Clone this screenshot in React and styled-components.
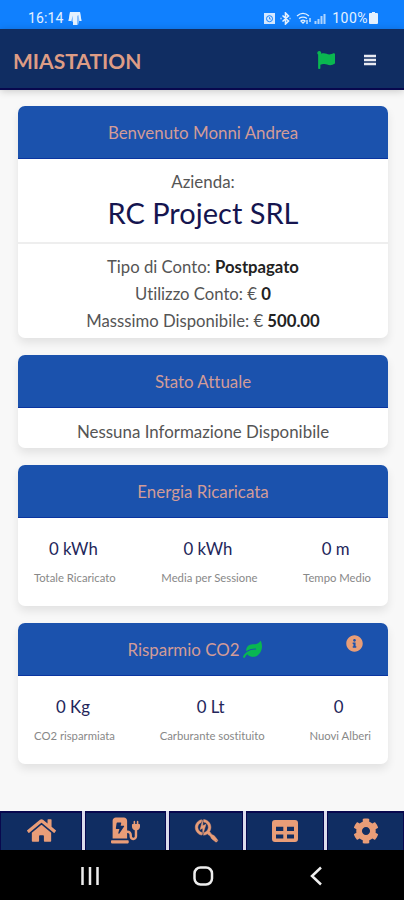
import React from 'react'
import styled, { createGlobalStyle } from 'styled-components';
import { FaFlag, FaLeaf, FaInfoCircle, FaHome, FaChargingStation, FaSearchengin, FaCog } from 'react-icons/fa';

const GlobalStyle = createGlobalStyle`
    * {
        box-sizing: border-box;
    }

    body {
        margin: 0;
        font-family: Lato, 'Liberation Sans', sans-serif;
        font-variant-ligatures: none;
        background-color: #f8f8f8;
    }
`

const Screen = styled.div`
    display: flex;
    flex-direction: column;
    height: 900px;
    width: 404px;
    overflow: hidden;
`

const StatusBar = styled.div`
    display: flex;
    align-items: center;
    flex: none;
    height: 29px;
    padding: 7px 26px 0 28px;
    background-color: #1080fe;
    color: #e4f1ff;
    font-family: Roboto, sans-serif;
    font-size: 14px;

    svg {
        display: block;
    }
`

const StatusIcons = styled.div`
    display: flex;
    align-items: center;
    gap: 5px;
    margin-left: auto;
`

const Clock = styled.span`
    margin-right: 5px;
    letter-spacing: 0.1px;
`

const Percent = styled.span`
    margin: 0 -4px 0 0;
    letter-spacing: 0.5px;
`

const Header = styled.header`
    display: flex;
    align-items: center;
    flex: none;
    height: 61px;
    padding: 3px 28px 0 13px;
    background-color: #102d62;
    border-bottom: 2px solid #08084e;
    box-shadow: 0 1px 8px rgba(0, 0, 0, 0.2);
    z-index: 1;
`

const Brand = styled.h1`
    margin: 1px auto 0 0;
    color: #dd9c85;
    font-size: 21px;
    font-weight: 700;
`

const FlagButton = styled.button`
    display: flex;
    padding: 0;
    border: none;
    background: none;
    color: #0ab750;
    font-size: 18px;
`

const MenuButton = styled(FlagButton)`
    margin-left: 29px;
    color: #e8eaf2;
`

const Content = styled.main`
    display: flex;
    flex-direction: column;
    flex: 1;
    gap: 17px;
    padding: 16px 16px 0 18px;
`

const Card = styled.section`
    display: flex;
    flex-direction: column;
    flex: none;
    height: ${({ $height }) => $height}px;
    border-radius: 7px;
    background-color: #fff;
    box-shadow: 0 5px 10px rgba(0, 0, 0, 0.09);
    overflow: hidden;
`

const CardTitle = styled.h2`
    display: flex;
    align-items: center;
    justify-content: center;
    position: relative;
    flex: none;
    height: 53px;
    margin: 0;
    padding-right: ${({ $offset }) => $offset || 0}px;
    background-color: #1b52ad;
    border-bottom: 1px solid #0a35a0;
    color: #d29c98;
    font-size: 16.900px;
    font-weight: 400;

    .leaf {
        margin-left: 3px;
        color: #09b751;
        font-size: 19px;
    }

    .info {
        position: absolute;
        top: 12px;
        right: 25px;
        color: #e89e78;
        font-size: 17px;
    }
`

const Company = styled.div`
    height: 85px;
    padding-top: 12px;
    border-bottom: 2px solid #eee;
    text-align: center;
    color: #555;
    font-size: 16.900px;
    line-height: 22px;
`

const CompanyName = styled.div`
    color: #15154f;
    font-size: 29px;
    line-height: 40px;
`

const Lines = styled.div`
    padding-top: 10px;
    text-align: center;
    color: #555;
    font-size: ${({ $size }) => $size}px;
    line-height: 27px;

    b {
        color: #222;
    }
`

const Stats = styled.div`
    display: flex;
    justify-content: space-between;
    padding: 20px 17px 0 16px;
`

const Stat = styled.div`
    text-align: center;
    white-space: nowrap;
    color: #888;
    font-size: 11.300px;
    line-height: 18px;
`

const StatValue = styled.div`
    margin: 0 2px 9px 0;
    padding-right: 1px;
    color: #23265a;
    font-size: 16.800px;
    line-height: 22px;
`

const TabBar = styled.nav`
    display: flex;
    flex: none;
    gap: 3px;
    height: 39px;
    background-color: #dcdcec;
`

const Tab = styled.button`
    display: flex;
    align-items: center;
    justify-content: center;
    flex: none;
    width: ${({ $width }) => $width}px;
    padding: 0 0 2px;
    border: 1px solid #08084e;
    border-top-width: 2px;
    border-bottom: none;
    background-color: #102d62;
    color: #e99d78;
    font-size: ${({ $size }) => $size}px;

    .bold {
        stroke: currentColor;
        stroke-width: 10px;
    }
`

const SystemBar = styled.div`
    display: flex;
    flex: none;
    height: 50px;
    background-color: #000;

    svg {
        display: block;
    }
`

const TableIcon = () => (
    <svg width="26" height="22" viewBox="0 0 26 22" fill="currentColor" fillRule="evenodd">
        <path d="M3 0h20q3 0 3 3v16q0 3-3 3H3q-3 0-3-3V3q0-3 3-3zM4 6.700V11h7.300V6.700zM15 6.700V11h7V6.700zM4 14.500v4h7.300v-4zM15 14.500v4h7v-4z" />
    </svg>
)

const SearchIcon = () => <FaSearchengin className="bold" />

const tabs = [
    { Icon: FaHome, width: 82, size: 29 },
    { Icon: FaChargingStation, width: 81, size: 29 },
    { Icon: SearchIcon, width: 74, size: 25 },
    { Icon: TableIcon, width: 78, size: 26 },
    { Icon: FaCog, width: 77, size: 26 },
]

const energy = [
    { value: "0 kWh", label: "Totale Ricaricato" },
    { value: "0 kWh", label: "Media per Sessione" },
    { value: "0 m", label: "Tempo Medio" },
]

const savings = [
    { value: "0 Kg", label: "CO2 risparmiata" },
    { value: "0 Lt", label: "Carburante sostituito" },
    { value: "0", label: "Nuovi Alberi" },
]

const StatRow = ({ items }) => (
    <Stats>
        {
            items.map(({ value, label }) => (
                <Stat key={label}>
                    <StatValue>{value}</StatValue>
                    {label}
                </Stat>
            ))
        }
    </Stats>
)

const App = () => {
    return (
        <Screen>
            <GlobalStyle />
            <StatusBar>
                <Clock>16:14</Clock>
                <svg width="14" height="13" viewBox="0 0 14 13" fill="currentColor">
                    <path d="M2 0h10l1.500 9h-2.500v1l-1 3H5V10L3 9H.5z" opacity=".55" />
                    <path d="M2 0h10l1.500 9h-2L10.500 3 9 4v9H5V3.500L3 9H.5z" />
                </svg>
                <StatusIcons>
                    <svg width="11" height="11" viewBox="0 0 11 11">
                        <path d="M0 0h11v11H0z" fill="#d5e8ff" />
                        <circle cx="5.500" cy="5.700" r="3" fill="none" stroke="#1080fe" />
                        <path d="M5.500 4v2H7" fill="none" stroke="#1080fe" strokeWidth=".8" />
                    </svg>
                    <svg width="11" height="13" viewBox="0 0 11 13" fill="none" stroke="currentColor" strokeWidth="1.600">
                        <path d="M2.500 3.500l6 5.500L5.500 12V1l3 3-6 5.500M.5 6.500h1M9.500 6.500h1" />
                    </svg>
                    <svg width="31" height="13" viewBox="0 0 31 13" fill="none" stroke="currentColor" strokeWidth="1.300">
                        <path d="M1 4c4-3.500 8-3.500 12 0M3 6.500c3-2 5-2 8 0M5 9c1-1 3-1 4 0l-2 2zM11 8v4M14 6v4" />
                        <path d="M19.500 12V9M22.500 12V7M25.500 12V4M28.500 12V2" strokeWidth="2" opacity=".75" />
                    </svg>
                    <Percent>100%</Percent>
                    <svg width="9" height="12" viewBox="0 0 9 12" fill="currentColor">
                        <path d="M3 0h3v1h2q1 0 1 1v9q0 1-1 1H1q-1 0-1-1V2q0-1 1-1h2z" />
                    </svg>
                </StatusIcons>
            </StatusBar>
            <Header>
                <Brand>MIASTATION</Brand>
                <FlagButton><FaFlag /></FlagButton>
                <MenuButton>
                    <svg width="12" height="12" viewBox="0 0 12 12" fill="none" stroke="currentColor" strokeWidth="2.500">
                        <path d="M0 2h12M0 6h12M0 10h12" />
                    </svg>
                </MenuButton>
            </Header>
            <Content>
                <Card $height={232}>
                    <CardTitle>Benvenuto Monni Andrea</CardTitle>
                    <Company>
                        Azienda:
                        <CompanyName>RC Project SRL</CompanyName>
                    </Company>
                    <Lines $size={16.7}>
                        <div>Tipo di Conto: <b>Postpagato</b></div>
                        <div>Utilizzo Conto: € <b>0</b></div>
                        <div>Masssimo Disponibile: € <b>500.00</b></div>
                    </Lines>
                </Card>
                <Card $height={93}>
                    <CardTitle>Stato Attuale</CardTitle>
                    <Lines $size={16.9}>Nessuna Informazione Disponibile</Lines>
                </Card>
                <Card $height={141}>
                    <CardTitle>Energia Ricaricata</CardTitle>
                    <StatRow items={energy} />
                </Card>
                <Card $height={141}>
                    <CardTitle $offset={17}>
                        Risparmio CO2 <FaLeaf className="leaf" />
                        <FaInfoCircle className="info" />
                    </CardTitle>
                    <StatRow items={savings} />
                </Card>
            </Content>
            <TabBar>
                {
                    tabs.map(({ Icon, width, size }, i) => (
                        <Tab key={i} $width={width} $size={size}><Icon /></Tab>
                    ))
                }
            </TabBar>
            <SystemBar>
                <svg width="404" height="50" viewBox="0 0 404 50" fill="none" stroke="#eee" strokeWidth="2.500">
                    <path d="M82.500 17v18M90 17v18M97.500 17v18" />
                    <rect x="194.500" y="17.500" width="17.500" height="17" rx="6" />
                    <path d="M321 17.500l-9 8.500 9 8.500" />
                </svg>
            </SystemBar>
        </Screen>
    )
}

export default App
